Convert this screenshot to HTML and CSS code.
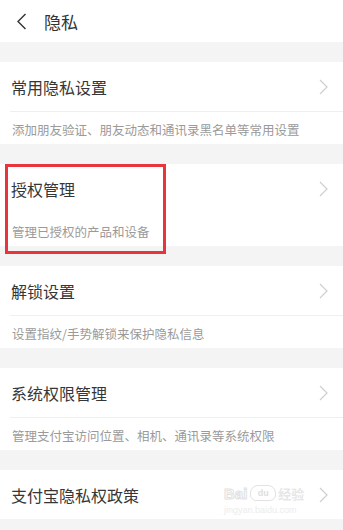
FILE: index.html
```html
<!DOCTYPE html>
<html lang="zh-CN">
<head>
<meta charset="utf-8">
<title>隐私</title>
<link rel="stylesheet" href="styles.css">
</head>
<body>
<div class="page">
  <header class="header">
    <svg class="back" width="11" height="17" viewBox="0 0 11 17"><path d="M9.5 1 L2 8.5 L9.5 16" fill="none" stroke="#333" stroke-width="1.4"/></svg>
    <span class="header-title">隐私</span>
  </header>

  <section class="card">
    <div class="row"><span class="row-title">常用隐私设置</span><svg class="chev" width="9" height="16" viewBox="0 0 9 16"><path d="M1 1 L8 8 L1 15" fill="none" stroke="#cfcfcf" stroke-width="1.2"/></svg></div>
    <div class="divider"></div>
    <div class="sub">添加朋友验证、朋友动态和通讯录黑名单等常用设置</div>
  </section>

  <section class="card card-highlight">
    <div class="row"><span class="row-title">授权管理</span><svg class="chev" width="9" height="16" viewBox="0 0 9 16"><path d="M1 1 L8 8 L1 15" fill="none" stroke="#cfcfcf" stroke-width="1.2"/></svg></div>
    <div class="divider divider-none"></div>
    <div class="sub">管理已授权的产品和设备</div>
    <div class="redbox"></div>
  </section>

  <section class="card">
    <div class="row"><span class="row-title">解锁设置</span><svg class="chev" width="9" height="16" viewBox="0 0 9 16"><path d="M1 1 L8 8 L1 15" fill="none" stroke="#cfcfcf" stroke-width="1.2"/></svg></div>
    <div class="divider"></div>
    <div class="sub">设置指纹/手势解锁来保护隐私信息</div>
  </section>

  <section class="card">
    <div class="row"><span class="row-title">系统权限管理</span><svg class="chev" width="9" height="16" viewBox="0 0 9 16"><path d="M1 1 L8 8 L1 15" fill="none" stroke="#cfcfcf" stroke-width="1.2"/></svg></div>
    <div class="divider"></div>
    <div class="sub">管理支付宝访问位置、相机、通讯录等系统权限</div>
  </section>

  <section class="card card-last">
    <div class="row"><span class="row-title">支付宝隐私权政策</span><svg class="chev" width="9" height="16" viewBox="0 0 9 16"><path d="M1 1 L8 8 L1 15" fill="none" stroke="#cfcfcf" stroke-width="1.2"/></svg></div>
    <div class="watermark">
      <div class="wm-top"><span class="wm-bai">Bai</span><span class="wm-paw">du</span><span class="wm-jy">经验</span></div>
      <div class="wm-url">jingyan.baidu.com</div>
    </div>
  </section>
</div>
</body>
</html>
```

FILE: styles.css
```css
html, body {
  margin: 0;
  padding: 0;
  background: #f4f4f4;
}
body {
  font-family: "Noto Sans CJK SC", "Noto Sans", sans-serif;
  color: #333;
}
.page {
  width: 343px;
  height: 530px;
  overflow: hidden;
  background: #f4f4f4;
}
.header {
  height: 42px;
  background: #fff;
  display: flex;
  align-items: center;
  padding-left: 16px;
  box-sizing: border-box;
}
.back {
  display: block;
}
.header-title {
  margin-left: 17px;
  font-size: 17px;
  line-height: 20px;
  color: #333;
  margin-top: 1px;
}
.card {
  position: relative;
  background: #fff;
  margin-top: 20px;
}
.row {
  height: 49px;
  display: flex;
  align-items: center;
  justify-content: space-between;
  padding: 1px 15px 0 11px;
  box-sizing: border-box;
}
.row-title {
  font-size: 16px;
  line-height: 20px;
  color: #363636;
}
.chev {
  display: block;
}
.divider {
  height: 1px;
  margin-left: 10px;
  background: #efefef;
}
.divider-none {
  background: transparent;
}
.sub {
  height: 32px;
  box-sizing: border-box;
  padding: 6px 0 3px 12px;
  font-size: 12.5px;
  line-height: 23px;
  color: #9a9a9a;
  white-space: nowrap;
}
.redbox {
  position: absolute;
  left: 5px;
  top: 0;
  width: 161px;
  height: 90px;
  box-sizing: border-box;
  border: 3px solid #e8343c;
}
.watermark {
  position: absolute;
  left: 224px;
  top: 7px;
  width: 94px;
  pointer-events: none;
}
.wm-top {
  display: flex;
  align-items: flex-end;
  height: 24px;
}
.wm-bai {
  font-family: "Liberation Sans", sans-serif;
  font-size: 15px;
  font-weight: bold;
  line-height: 14px;
  color: #fff;
  -webkit-text-stroke: 1px #e2e2e2;
}
.wm-paw {
  width: 26px;
  height: 16px;
  margin-left: 3px;
  border-radius: 8px 8px 6px 6px;
  border: 1px solid #e2e2e2;
  font-family: "Liberation Sans", sans-serif;
  font-size: 9px;
  line-height: 14px;
  text-align: center;
  color: #dedede;
  font-weight: bold;
  box-sizing: border-box;
}
.wm-jy {
  margin-left: 2px;
  font-size: 13px;
  line-height: 14px;
  color: #e6e6e6;
  font-weight: bold;
}
.wm-url {
  margin-top: 4px;
  font-family: "Liberation Sans", sans-serif;
  font-size: 9px;
  line-height: 10px;
  color: #ececec;
}
```
